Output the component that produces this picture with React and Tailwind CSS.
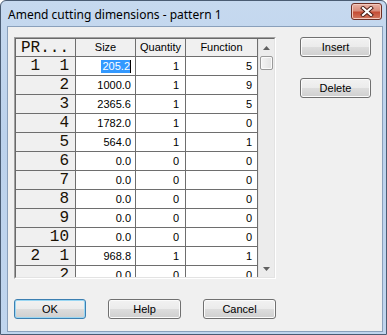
import React from "react";

const rows = [
  ["1  1", "205.2", "1", "5", true],
  ["2", "1000.0", "1", "9"],
  ["3", "2365.6", "1", "5"],
  ["4", "1782.0", "1", "0"],
  ["5", "564.0", "1", "1"],
  ["6", "0.0", "0", "0"],
  ["7", "0.0", "0", "0"],
  ["8", "0.0", "0", "0"],
  ["9", "0.0", "0", "0"],
  ["10", "0.0", "0", "0"],
  ["2  1", "968.8", "1", "1"],
  ["2", "0.0", "0", "0"],
];

const mono = { fontFamily: '"Liberation Mono", "Courier New", monospace' };

function Btn({ children, className, def }) {
  return (
    <div
      className={
        def
          ? `flex items-center justify-center rounded-[3px] border border-[#3c7fb1] bg-[linear-gradient(to_bottom,#f2f2f2_0%,#ebebeb_50%,#dddddd_51%,#cfcfcf_100%)] shadow-[inset_0_0_0_1px_#9ad7f3] text-[11px] text-black ${className}`
          : `flex items-center justify-center rounded-[3px] border border-[#707070] bg-[linear-gradient(to_bottom,#f2f2f2_0%,#ebebeb_50%,#dddddd_51%,#cfcfcf_100%)] shadow-[inset_0_0_0_1px_#fbfbfb] text-[11px] text-black ${className}`
      }
    >
      {children}
    </div>
  );
}

export default function App() {
  return (
    <div
      className="w-[387px] h-[335px] flex flex-col rounded-t-[6px] border border-[#4a5c73] bg-[linear-gradient(to_bottom,#c6d9ef_0%,#bcd2ec_40%,#c0d5ee_100%)] overflow-hidden"
      style={{ fontFamily: '"Liberation Sans", Arial, sans-serif' }}
    >
      {/* title bar */}
      <div className="h-[25px] flex items-center pl-[7px] pr-[4px] shrink-0">
        <div
          className="text-[12px] text-black leading-none pt-[2px]"
          style={{ fontFamily: '"Noto Sans", "Open Sans", sans-serif' }}
        >
          Amend cutting dimensions - pattern 1
        </div>
        <div className="ml-auto mt-[-5px] w-[31px] h-[17px] rounded-[3px] border border-[#6e2f25] bg-[linear-gradient(to_bottom,#eab3a6_0%,#d98d7c_45%,#c54d35_55%,#d37a62_100%)] shadow-[inset_0_0_0_1px_#f3c9bd] flex items-center justify-center">
          <svg width="14" height="11" viewBox="0 0 14 11">
            <path d="M3 2 L11 9 M11 2 L3 9" stroke="#4a1d15" strokeWidth="4" strokeLinecap="square" />
            <path d="M3 2 L11 9 M11 2 L3 9" stroke="#ffffff" strokeWidth="2.2" strokeLinecap="square" />
          </svg>
        </div>
      </div>

      {/* client */}
      <div className="flex-1 ml-[6px] mr-[3px] mb-[2px] border border-[#8aa0bb] bg-[#f0f0f0] flex flex-col pt-[10px] pl-[6px]">
        <div className="flex">
          {/* grid */}
          <div className="w-[262px] h-[242px] border border-[#a0a0a0] border-r-white border-b-white">
            <div className="w-full h-full border border-[#696969] border-r-[#e3e3e3] border-b-[#e3e3e3] flex overflow-hidden bg-[#f0f0f0]">
              <div className="w-[242px] flex flex-col">
                {/* header */}
                <div className="flex h-[18px] shrink-0 border-b border-[#6e6e6e] bg-[#f0f0f0]">
                  <div
                    className="w-[60px] border-r border-[#6e6e6e] flex items-center pl-[5px] text-[16px] text-[#1a1205] leading-none"
                    style={mono}
                  >
                    PR...
                  </div>
                  <div className="w-[60px] border-r border-[#6e6e6e] flex items-center justify-center text-[11px]">
                    Size
                  </div>
                  <div className="w-[50px] border-r border-[#6e6e6e] flex items-center justify-center text-[11px]">
                    Quantity
                  </div>
                  <div className="w-[72px] border-r border-[#6e6e6e] flex items-center justify-center text-[11px]">
                    Function
                  </div>
                </div>
                {rows.map((r, i) => (
                  <div key={i} className="flex h-[19px] shrink-0 border-b border-[#6e6e6e]">
                    <div
                      className="w-[60px] border-r border-[#6e6e6e] bg-[#f0f0f0] flex items-center justify-end pr-[6px] text-[16px] text-[#1a1205] leading-none whitespace-pre"
                      style={mono}
                    >
                      {r[0]}
                    </div>
                    <div className="w-[60px] border-r border-[#6e6e6e] bg-white flex items-center justify-end pr-[4px] text-[11px]">
                      {r[4] ? (
                        <span className="bg-[#3399ff] text-white h-[13px] flex items-center pl-[1px] border-r border-black">
                          {r[1]}
                        </span>
                      ) : (
                        r[1]
                      )}
                    </div>
                    <div className="w-[50px] border-r border-[#6e6e6e] bg-white flex items-center justify-end pr-[6px] text-[11px]">
                      {r[2]}
                    </div>
                    <div className="w-[72px] border-r border-[#6e6e6e] bg-white flex items-center justify-end pr-[5px] text-[11px]">
                      {r[3]}
                    </div>
                  </div>
                ))}
              </div>
              {/* scrollbar */}
              <div className="w-[16px] flex flex-col bg-[#ececec] border-l border-[#e2e2e2]">
                <div className="h-[17px] flex items-center justify-center shrink-0">
                  <svg width="7" height="4" viewBox="0 0 7 4">
                    <path d="M0 4 L3.5 0 L7 4 Z" fill="#606060" />
                  </svg>
                </div>
                <div className="mx-[1px] h-[14px] rounded-[2px] border border-[#9a9a9a] bg-[linear-gradient(to_right,#f4f4f4,#e2e2e2)] shadow-[inset_0_0_0_1px_#fafafa]" />
                <div className="flex-1" />
                <div className="h-[17px] flex items-center justify-center shrink-0">
                  <svg width="7" height="4" viewBox="0 0 7 4">
                    <path d="M0 0 L3.5 4 L7 0 Z" fill="#606060" />
                  </svg>
                </div>
              </div>
            </div>
          </div>

          {/* side buttons */}
          <div className="ml-[24px] flex flex-col gap-[21px]">
            <Btn className="w-[71px] h-[20px]">Insert</Btn>
            <Btn className="w-[71px] h-[20px]">Delete</Btn>
          </div>
        </div>

        {/* bottom buttons */}
        <div className="flex gap-[22px] mt-[20px]">
          <Btn def className="w-[72px] h-[20px]">OK</Btn>
          <Btn className="w-[73px] h-[20px]">Help</Btn>
          <Btn className="w-[73px] h-[20px]">Cancel</Btn>
        </div>
      </div>
    </div>
  );
}
